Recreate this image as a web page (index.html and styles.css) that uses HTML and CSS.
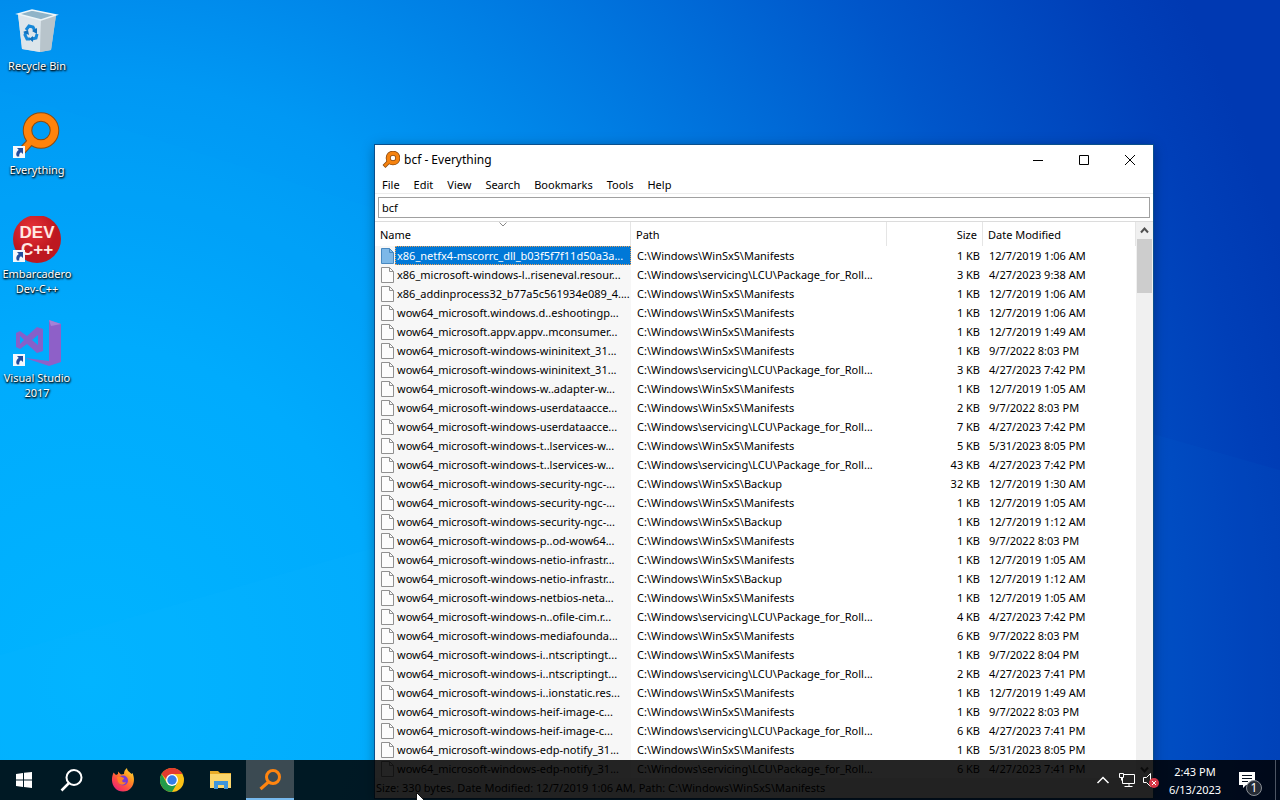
FILE: index.html
```html
<!DOCTYPE html>
<html lang="en">
<head>
<meta charset="utf-8">
<title>Desktop</title>
<link rel="stylesheet" href="styles.css">
</head>
<body>
<svg class="defs" aria-hidden="true">
  <defs>
    <symbol id="file" viewBox="0 0 13 16">
      <path d="M.5.5h8l4 4v11H.5z" fill="#fcfcfc" stroke="#909090"/>
      <path d="M8.500.5v4h4" fill="none" stroke="#909090"/>
    </symbol>
    <symbol id="file-selected" viewBox="0 0 13 16">
      <path d="M.5.5h8l4 4v11H.5z" fill="#7db8e8" stroke="#4888c0"/>
      <path d="M8.500.5v4h4" fill="none" stroke="#4888c0"/>
    </symbol>
    <symbol id="shortcut" viewBox="0 0 12 12">
      <path d="M0 0h12v12H0z" fill="#f4f8fc"/>
      <path d="M4 2h6v6L8 6.200C6.500 7 6 8.500 6.300 10.500H4C2.500 8 3.500 5.500 5.800 4z" fill="#234c9c"/>
    </symbol>
    <symbol id="lens" viewBox="0 0 48 48">
      <path d="M19 28 7 41" stroke="#8a4a10" stroke-width="8"/>
      <circle cx="28" cy="18.500" r="13.500" fill="none" stroke="#8a4a10" stroke-width="9.500"/>
      <path d="M20 27 7.500 40.500" stroke="#ff830b" stroke-width="6"/>
      <circle cx="28" cy="18.500" r="13.500" fill="none" stroke="#ff830b" stroke-width="7.500"/>
    </symbol>
    <symbol id="lens-small" viewBox="0 0 18 18">
      <path d="M7 10.500 2 15.500" stroke="#8a4a10" stroke-width="4"/>
      <circle cx="11" cy="7" r="4.800" fill="none" stroke="#8a4a10" stroke-width="5"/>
      <path d="M7.500 10 2.500 15" stroke="#f5820f" stroke-width="2.500"/>
      <circle cx="11" cy="7" r="4.800" fill="none" stroke="#f5820f" stroke-width="3.500"/>
    </symbol>
  </defs>
</svg>

<main class="desktop">
  <svg class="wallpaper" viewBox="0 0 1280 800" preserveAspectRatio="none" aria-hidden="true">
    <path d="M0 90 540 260 1280 470V800H0z" fill="#00b8ff" opacity=".03"/>
    <path d="M0 655 540 500v300H0z" fill="#20c8ff" opacity=".05"/>
  </svg>

  <nav class="shortcuts" aria-label="Desktop shortcuts">
    <a class="shortcut" href="#recycle">
      <svg class="shortcut-icon" viewBox="0 0 48 48">
        <path d="m5 6 14-4 24 5-5 35-11 2-18-3z" fill="#c5d5df"/>
        <path d="m5 6 23 6-1 32-18-3z" fill="#dce5eb"/>
        <path d="m28 12 15-5-5 35-11 2z" fill="#b8c4cb"/>
        <path d="m5 6 14-4 24 5-15 5z" fill="#8fb4c8" stroke="#edf5f8" stroke-width="1.500"/>
        <path d="m13 22 3-4 4 1 2 4" fill="none" stroke="#1687d8" stroke-width="3"/>
        <path d="m13 24-1 3 2 4h3M19 31l4-1 1-4" fill="none" stroke="#1687d8" stroke-width="3"/>
        <path d="m19 23 5-3v6zM10 24l5-2 1 5zM20 28v6l-4-3z" fill="#1170bd"/>
      </svg>
      <span>Recycle Bin</span>
    </a>
    <a class="shortcut" href="#everything">
      <svg class="shortcut-icon" viewBox="0 0 48 48"><use href="#lens" width="48" height="48"/><use href="#shortcut" y="34" width="12" height="12"/></svg>
      <span>Everything</span>
    </a>
    <a class="shortcut" href="#devcpp">
      <svg class="shortcut-icon" viewBox="0 0 48 48">
        <defs><radialGradient id="ball" cx=".4" cy=".3"><stop stop-color="#e83238"/><stop offset="1" stop-color="#bd1820"/></radialGradient></defs>
        <circle cx="24" cy="23" r="24" fill="url(#ball)"/>
        <text class="dev-logo"><tspan x="24" y="22">DEV</tspan><tspan x="24" y="39">C++</tspan></text>
        <use href="#shortcut" y="34" width="12" height="12"/>
      </svg>
      <span>Embarcadero Dev-C++</span>
    </a>
    <a class="shortcut" href="#visualstudio">
      <svg class="shortcut-icon" viewBox="0 0 48 48">
        <path d="m36 0 12 4v38l-12 4-24-8 24 3z" fill="#8e60c8"/>
        <path d="m36 0 12 4-10 2z" fill="#a582d6"/>
        <path fill-rule="evenodd" d="m3 13 4-2 7 5 10-9 6 2v22l-6 2-10-9-7 5-4-2zm4 3v8l4-4zm18-1-6 5 6 5z" fill="#8660c9"/>
        <use href="#shortcut" y="34" width="12" height="12"/>
      </svg>
      <span>Visual Studio 2017</span>
    </a>
  </nav>

  <section class="window" aria-label="bcf - Everything">
    <header class="titlebar">
      <svg class="title-icon" viewBox="0 0 18 18"><use href="#lens-small" width="18" height="18"/></svg>
      <h1 class="title">bcf - Everything</h1>
      <div class="controls">
        <button class="control" aria-label="Minimize"><svg viewBox="0 0 12 12"><path d="M1 6.500h10"/></svg></button>
        <button class="control" aria-label="Maximize"><svg viewBox="0 0 12 12"><path d="M1.500 1.500h9v9h-9z"/></svg></button>
        <button class="control" aria-label="Close"><svg viewBox="0 0 12 12"><path d="m1 1 10 10M11 1 1 11"/></svg></button>
      </div>
    </header>
    <nav class="menu" aria-label="Menu">
      <button>File</button><button>Edit</button><button>View</button><button>Search</button><button>Bookmarks</button><button>Tools</button><button>Help</button>
    </nav>
    <div class="search"><input type="text" value="bcf" aria-label="Search"></div>
    <div class="list">
      <table class="results">
        <colgroup><col class="col-name"><col class="col-path"><col class="col-size"><col class="col-date"></colgroup>
        <thead>
          <tr><th>Name<svg class="sort" viewBox="0 0 8 5"><path d="m.5.5 3.500 3.500L7.500.5"/></svg></th><th>Path</th><th>Size</th><th>Date Modified</th></tr>
        </thead>
        <tbody id="rows"></tbody>
      </table>
      <div class="scrollbar" aria-hidden="true">
        <svg viewBox="0 0 16 17"><path d="m4.500 10.500 3.500-4 3.500 4"/></svg>
        <div class="thumb"></div>
        <svg class="scroll-down" viewBox="0 0 16 17"><path d="m4.500 6.500 3.500 4 3.500-4"/></svg>
      </div>
    </div>
    <footer class="status">Size: 330 bytes, Date Modified: 12/7/2019 1:06 AM, Path: C:\Windows\WinSxS\Manifests</footer>
  </section>
</main>

<footer class="taskbar">
  <button class="task" aria-label="Start"><svg viewBox="0 0 24 24"><path d="m4 6 7-1v6.500H4zm8-1.200L20 4v7.500h-8zM4 12.500h7V19l-7-1zm8 0h8V20l-8-1z" fill="#fff"/></svg></button>
  <button class="task" aria-label="Search"><svg viewBox="0 0 24 24"><circle cx="14" cy="9.500" r="7.500" fill="none" stroke="#fff" stroke-width="2"/><path d="m9 15-7.500 7.500" stroke="#fff" stroke-width="2.500"/></svg></button>
  <div class="apps">
    <button class="task" aria-label="Firefox"><svg viewBox="0 0 24 24">
      <defs><linearGradient id="fox" x1="1" y1="0" x2=".2" y2="1"><stop stop-color="#fff04a"/><stop offset=".35" stop-color="#ff9a1f"/><stop offset=".7" stop-color="#ff4a45"/><stop offset="1" stop-color="#e52277"/></linearGradient></defs>
      <path d="M2.500 4.500 5 7l2-1V3.500l3 3 3-.5c0-3 1-4.500 3-6 0 3 3 4 4.500 6L21.500 5c4 9-.5 18.500-9.500 18.500-8 0-14-8-9.500-19z" fill="url(#fox)"/>
      <circle cx="12" cy="12.500" r="5" fill="#7a3bd5"/>
      <path d="M6 9c3-1 4-.5 5.500.5 2 0 2 1.500 0 2.500-1 2 1 3 3.500 2-1 3-6 4-8 0z" fill="#ff7f25"/>
    </svg></button>
    <button class="task" aria-label="Chrome"><svg viewBox="0 0 24 24">
      <circle cx="12" cy="12" r="12" fill="#fbc116"/>
      <path d="M1.600 6A12 12 0 0 1 22.400 6H12v12z" fill="#e33b2e"/>
      <path d="M1.600 6A12 12 0 0 0 12 24l5.200-9-5.200 3-5.200-3z" fill="#229a4b"/>
      <circle cx="12" cy="12" r="6" fill="#fff"/><circle cx="12" cy="12" r="4.700" fill="#347ee8"/>
    </svg></button>
    <button class="task" aria-label="File Explorer"><svg viewBox="0 0 24 24">
      <path d="M1 3h8l2 2h11v4H1z" fill="#e9ac28"/><path d="M1 6h21v14H1z" fill="#fbd66c"/>
      <path d="M5 21v-8h14v8h-4v-4H9v4z" fill="#3e95dc"/>
    </svg></button>
    <button class="task task-active" aria-label="Everything"><svg viewBox="0 0 24 24"><circle cx="15" cy="10" r="6.500" fill="none" stroke="#ff8510" stroke-width="3"/><path d="m10.500 15-8 7" stroke="#ff8510" stroke-width="3"/></svg></button>
  </div>
  <div class="tray">
    <button class="tray-button" aria-label="Show hidden icons"><svg viewBox="0 0 24 20"><path d="m7.500 13 5.500-5.500 5.500 5.500" stroke-width="1.500"/></svg></button>
    <button class="tray-button" aria-label="Network"><svg viewBox="0 0 24 20"><path d="M9.500 4.500h11v9h-12V8M15 13.500v3M10.500 16.500h8M5.500 3.500h4v4h-4zM7.500 7.500v3"/></svg></button>
    <button class="tray-button" aria-label="Volume muted"><svg viewBox="0 0 24 20"><path d="M5.500 7.500h3l4-4v13l-4-4h-3z"/><circle cx="16" cy="13" r="5" fill="#d63646" stroke="none"/><path d="m14 11 4 4m0-4-4 4"/></svg></button>
  </div>
  <button class="clock"><span>2:43 PM</span><span>6/13/2023</span></button>
  <button class="notify" aria-label="Notifications">
    <svg viewBox="0 0 20 20"><path d="M2 2h16v13H9l-3 3v-3H2z" fill="#fff"/><path d="M5 5.500h10M5 8.500h10M5 11.500h6" stroke="#06101f"/></svg>
    <span class="badge">1</span>
  </button>
  <button class="peek" aria-label="Show desktop"></button>
</footer>

<svg class="cursor" viewBox="0 0 12 19" aria-hidden="true"><path d="M.5.5v16l4-3.500 2.500 5.500 2.500-1L7 12h5z" fill="#fff" stroke="#111"/></svg>

<script src="rows.js"></script>
</body>
</html>
```
FILE: styles.css
```css
* { box-sizing: border-box; }

body {
  margin: 0;
  height: 100vh;
  overflow: hidden;
  font: 11px/15px "Noto Sans", "Open Sans", sans-serif;
  color: #000;
}

button {
  margin: 0;
  padding: 0;
  border: 0;
  background: none;
  font: inherit;
  color: inherit;
}

.defs { position: absolute; width: 0; height: 0; }

.desktop {
  position: relative;
  height: 100vh;
  overflow: hidden;
  background: radial-gradient(ellipse 98% 175% at 7% 85%, #00b4ff 0%, #00abfd 24%, #0098f4 43%, #0078e0 60%, #0056ca 78%, #003fb8 94%, #0039b2 100%);
}

.wallpaper { position: absolute; inset: 0; width: 100%; height: 100%; }

.shortcuts {
  position: relative;
  display: flex;
  flex-direction: column;
  width: 74px;
  padding-top: 8px;
}

.shortcut {
  display: flex;
  flex-direction: column;
  align-items: center;
  gap: 2px;
  height: 104px;
  color: #fff;
  text-align: center;
  text-decoration: none;
  text-shadow: 1px 1px 2px #000, 0 1px 2px #000;
}

.shortcut-icon { width: 48px; height: 48px; flex: none; }

.dev-logo {
  font: bold 17px "Liberation Sans", sans-serif;
  fill: #ffe9e4;
  text-anchor: middle;
  text-shadow: none;
}

.window {
  position: absolute;
  left: 375px;
  top: 145px;
  width: 778px;
  display: flex;
  flex-direction: column;
  background: #fff;
  box-shadow: 0 0 0 1px #0a4f8c, 0 2px 12px rgba(0, 0, 0, 0.35);
}

.titlebar { display: flex; align-items: center; height: 29px; padding-left: 7px; gap: 4px; }
.title-icon { width: 18px; height: 18px; }
.title { flex: 1; margin: 0; font-size: 12px; font-weight: 400; }
.controls { display: flex; }
.control { display: grid; place-items: center; width: 46px; height: 29px; }
.control svg { width: 12px; height: 12px; fill: none; stroke: #000; }

.menu {
  display: flex;
  height: 20px;
  padding-top: 1px;
  border-bottom: 1px solid #ececec;
}

.menu button { padding: 0 7px; }

.search { padding: 3px; border-bottom: 1px solid #dcdcdc; }

.search input {
  display: block;
  width: 100%;
  height: 21px;
  padding: 0 3px;
  border: 1px solid #a0a0a0;
  font: inherit;
  color: inherit;
  outline: 0;
}

.list { display: flex; }

.results {
  flex: 1;
  width: 0;
  table-layout: fixed;
  border-collapse: separate;
  border-spacing: 0;
}

.col-name { width: 256px; }
.col-path { width: 256px; }
.col-size { width: 96px; }

.results th {
  position: relative;
  height: 24px;
  padding: 0 5px;
  border-right: 1px solid #e5e5e5;
  font-weight: 400;
  text-align: left;
}

.results th:nth-child(3) { text-align: right; }

.results td {
  height: 19px;
  padding: 0 0 0 6px;
  overflow: hidden;
  white-space: nowrap;
}

.results td:nth-child(3) { padding: 0 3px 0 0; text-align: right; }

.results td:first-child { background: #f7f7f7; }

.sort {
  position: absolute;
  left: calc(50% - 4px);
  top: 0;
  width: 8px;
  height: 5px;
  fill: none;
  stroke: #888;
}

.name { display: flex; align-items: center; gap: 1px; }
.name svg { flex: none; width: 13px; height: 16px; }
.name span { flex: 1; height: 19px; padding-left: 2px; line-height: 19px; }

.selected .name span {
  height: 19px;
  outline: 1px dotted #e6a15c;
  outline-offset: -1px;
  background: #0078d7;
  color: #fff;
}

.scrollbar {
  display: flex;
  flex-direction: column;
  width: 17px;
  background: #f0f0f0;
}

.scrollbar svg { width: 17px; height: 17px; fill: none; stroke: #505050; stroke-width: 2; }
.thumb { height: 54px; margin: 0 1px; background: #cdcdcd; }
.scrollbar .scroll-down { margin-top: auto; }

.status { height: 20px; padding: 2px 1px; background: #f0f0f0; }

.taskbar {
  position: absolute;
  left: 0;
  right: 0;
  bottom: 0;
  display: flex;
  height: 40px;
  background: rgba(0, 0, 0, 0.86);
  color: #fff;
}

.task { display: grid; place-items: center; width: 48px; height: 40px; }
.task svg { width: 24px; height: 24px; }
.apps { display: flex; gap: 1px; padding-left: 3px; }
.task-active { background: #3b4a52; border-bottom: 2px solid #76b9ed; }

.tray { display: flex; margin-left: auto; }
.tray-button { display: grid; place-items: center; width: 24px; }
.tray-button svg { width: 24px; height: 20px; fill: none; stroke: #fff; }

.clock {
  display: flex;
  flex-direction: column;
  justify-content: center;
  gap: 3px;
  width: 66px;
}

.notify { position: relative; display: grid; place-items: center; width: 38px; }
.notify svg { width: 20px; height: 20px; }

.badge {
  position: absolute;
  left: 18px;
  bottom: 4px;
  width: 16px;
  height: 16px;
  border: 1px solid #8a8f96;
  border-radius: 50%;
  background: #252b35;
  font-size: 12px;
  line-height: 14px;
}

.peek { width: 5px; margin-left: 9px; border-left: 1px solid #4d5563; }

.cursor { position: absolute; left: 416px; top: 792px; width: 12px; height: 19px; }
```
FILE: rows.js
```js
const M = "C:\\Windows\\WinSxS\\Manifests";
const B = "C:\\Windows\\WinSxS\\Backup";
const L = "C:\\Windows\\servicing\\LCU\\Package_for_Roll...";

const files = [
  ["x86_netfx4-mscorrc_dll_b03f5f7f11d50a3a...", M, 1, "12/7/2019 1:06 AM"],
  ["x86_microsoft-windows-l..riseneval.resour...", L, 3, "4/27/2023 9:38 AM"],
  ["x86_addinprocess32_b77a5c561934e089_4....", M, 1, "12/7/2019 1:06 AM"],
  ["wow64_microsoft.windows.d..eshootingp...", M, 1, "12/7/2019 1:06 AM"],
  ["wow64_microsoft.appv.appv..mconsumer...", M, 1, "12/7/2019 1:49 AM"],
  ["wow64_microsoft-windows-wininitext_31...", M, 1, "9/7/2022 8:03 PM"],
  ["wow64_microsoft-windows-wininitext_31...", L, 3, "4/27/2023 7:42 PM"],
  ["wow64_microsoft-windows-w..adapter-w...", M, 1, "12/7/2019 1:05 AM"],
  ["wow64_microsoft-windows-userdataacce...", M, 2, "9/7/2022 8:03 PM"],
  ["wow64_microsoft-windows-userdataacce...", L, 7, "4/27/2023 7:42 PM"],
  ["wow64_microsoft-windows-t..lservices-w...", M, 5, "5/31/2023 8:05 PM"],
  ["wow64_microsoft-windows-t..lservices-w...", L, 43, "4/27/2023 7:42 PM"],
  ["wow64_microsoft-windows-security-ngc-...", B, 32, "12/7/2019 1:30 AM"],
  ["wow64_microsoft-windows-security-ngc-...", M, 1, "12/7/2019 1:05 AM"],
  ["wow64_microsoft-windows-security-ngc-...", B, 1, "12/7/2019 1:12 AM"],
  ["wow64_microsoft-windows-p..od-wow64...", M, 1, "9/7/2022 8:03 PM"],
  ["wow64_microsoft-windows-netio-infrastr...", M, 1, "12/7/2019 1:05 AM"],
  ["wow64_microsoft-windows-netio-infrastr...", B, 1, "12/7/2019 1:12 AM"],
  ["wow64_microsoft-windows-netbios-neta...", M, 1, "12/7/2019 1:05 AM"],
  ["wow64_microsoft-windows-n..ofile-cim.r...", L, 4, "4/27/2023 7:42 PM"],
  ["wow64_microsoft-windows-mediafounda...", M, 6, "9/7/2022 8:03 PM"],
  ["wow64_microsoft-windows-i..ntscriptingt...", M, 1, "9/7/2022 8:04 PM"],
  ["wow64_microsoft-windows-i..ntscriptingt...", L, 2, "4/27/2023 7:41 PM"],
  ["wow64_microsoft-windows-i..ionstatic.res...", M, 1, "12/7/2019 1:49 AM"],
  ["wow64_microsoft-windows-heif-image-c...", M, 1, "9/7/2022 8:03 PM"],
  ["wow64_microsoft-windows-heif-image-c...", L, 6, "4/27/2023 7:41 PM"],
  ["wow64_microsoft-windows-edp-notify_31...", M, 1, "5/31/2023 8:05 PM"],
  ["wow64_microsoft-windows-edp-notify_31...", L, 6, "4/27/2023 7:41 PM"]
];

document.getElementById("rows").innerHTML = files.map(([name, path, size, date], i) => `
  <tr${i === 0 ? ' class="selected"' : ""}>
    <td><div class="name"><svg><use href="#${i === 0 ? "file-selected" : "file"}"/></svg><span>${name}</span></div></td>
    <td>${path}</td><td>${size} KB</td><td>${date}</td>
  </tr>`).join("");
```
